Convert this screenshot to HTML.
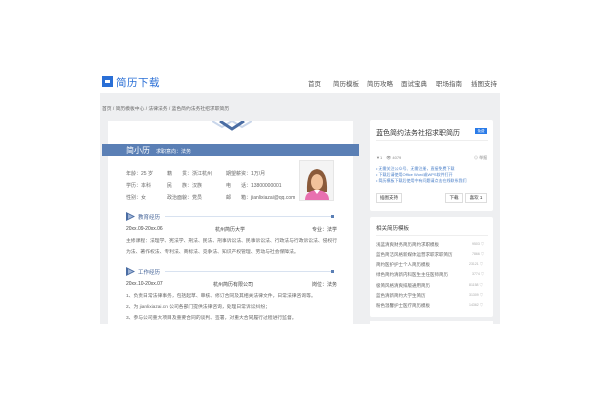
<!DOCTYPE html>
<html><head><meta charset="utf-8"><style>
*{margin:0;padding:0;box-sizing:border-box}
body{width:600px;height:400px;background:#fff;position:relative;overflow:hidden;font-family:"Liberation Sans","Noto Sans CJK SC",sans-serif;color:#333}
.a{position:absolute;white-space:nowrap}
.t{font-size:5px;color:#666}
</style></head><body>
<div class="a" style="left:102px;top:76px;width:11px;height:11px;background:#2a6fd6"></div>
<div class="a" style="left:105px;top:80px;width:5px;height:4px;border-top:3px solid #fff;"></div>
<div class="a" style="left:116px;top:75px;font-size:10.5px;color:#2a6fd6;letter-spacing:0.5px">简历下载</div>
<div class="a" style="left:308px;top:78px;font-size:6.5px;color:#555">首页</div>
<div class="a" style="left:333px;top:78px;font-size:6.5px;color:#555">简历模板</div>
<div class="a" style="left:367px;top:78px;font-size:6.5px;color:#555">简历攻略</div>
<div class="a" style="left:401px;top:78px;font-size:6.5px;color:#555">面试宝典</div>
<div class="a" style="left:436px;top:78px;font-size:6.5px;color:#555">职场指南</div>
<div class="a" style="left:471px;top:78px;font-size:6.5px;color:#555">插图支持</div>
<div class="a" style="left:100px;top:93px;width:400px;height:231px;background:#eeeff1"></div>
<div class="a t" style="left:102px;top:105px;font-size:4.8px;color:#666">首页 / 简历模板中心 / 法律法务 / 蓝色简约法务社招求职简历</div>
<div class="a" style="left:108px;top:121px;width:245px;height:203px;background:#fff"></div>
<svg class="a" style="left:212px;top:121px" width="40" height="10"><path d="M0 0 L10 6 L20 0 L30 6 L40 0" fill="none" stroke="#c9d6ea" stroke-width="2"/><path d="M8 0 L20 8 L32 0" fill="none" stroke="#4a6da3" stroke-width="3"/></svg>
<div class="a" style="left:102px;top:144px;width:257px;height:12px;background:#5a7fb5"></div>
<div class="a" style="left:126px;top:145px;font-size:8px;color:#fff">简小历</div>
<div class="a" style="left:156px;top:147.5px;font-size:5px;color:#fff">求职意向：法务</div>
<div class="a t" style="left:126px;top:170px">年龄：25 岁</div>
<div class="a t" style="left:167px;top:170px">籍　　贯：浙江杭州</div>
<div class="a t" style="left:226px;top:170px">期望薪资：1万/月</div>
<div class="a t" style="left:126px;top:182px">学历：本科</div>
<div class="a t" style="left:167px;top:182px">民　　族：汉族</div>
<div class="a t" style="left:226px;top:182px">电　　话：13800000001</div>
<div class="a t" style="left:126px;top:194px">性别：女</div>
<div class="a t" style="left:167px;top:194px">政治面貌：党员</div>
<div class="a t" style="left:226px;top:194px">邮　　箱：jianlixiazai@qq.com</div>
<div class="a" style="left:299px;top:160px;width:35px;height:41px;background:#f4f4f4;border:1px solid #e6e6e6"></div>
<svg class="a" style="left:303px;top:166px" width="28" height="34"><path d="M4 26 Q3 4 14 3 Q25 4 24 26 Z" fill="#8a5a3a"/><ellipse cx="14" cy="16" rx="6" ry="8" fill="#f2c29b"/><path d="M8 12 Q14 4 20 12 Q19 6 14 5 Q9 6 8 12Z" fill="#8a5a3a"/><path d="M2 34 Q2 25 14 24 Q26 25 26 34Z" fill="#e870b0"/><path d="M11 24 L14 28 L17 24Z" fill="#fff"/></svg>
<svg class="a" style="left:126px;top:212px" width="10" height="9"><path d="M0 0 L9 4.5 L0 9Z" fill="#4a6da3"/><path d="M2 2 L7 4.5 L2 7Z" fill="#9fb4d6"/></svg>
<div class="a" style="left:138px;top:213px;font-size:5.5px;color:#3f5f95">教育经历</div>
<div class="a" style="left:165px;top:216px;width:167px;height:1px;background:#d8e2f0"></div>
<div class="a" style="left:331px;top:215px;width:3px;height:3px;background:#5a7fb5"></div>
<div class="a t" style="left:126px;top:226px;color:#444">20xx.09-20xx.06</div>
<div class="a t" style="left:215px;top:226px;color:#444">杭州简历大学</div>
<div class="a t" style="left:312px;top:226px;color:#444">专业：法学</div>
<div class="a t" style="left:126px;top:237px;font-size:4.8px">主修课程：法理学、宪法学、刑法、民法、刑事诉讼法、民事诉讼法、行政法与行政诉讼法、侵权行</div>
<div class="a t" style="left:126px;top:248px;font-size:4.8px">为法、著作权法、专利法、商标法、竞争法、知识产权管理、劳动与社会保障法。</div>
<svg class="a" style="left:126px;top:267px" width="10" height="9"><path d="M0 0 L9 4.5 L0 9Z" fill="#4a6da3"/><path d="M2 2 L7 4.5 L2 7Z" fill="#9fb4d6"/></svg>
<div class="a" style="left:138px;top:268px;font-size:5.5px;color:#3f5f95">工作经历</div>
<div class="a" style="left:165px;top:271px;width:167px;height:1px;background:#d8e2f0"></div>
<div class="a" style="left:331px;top:270px;width:3px;height:3px;background:#5a7fb5"></div>
<div class="a t" style="left:126px;top:281px;color:#444">20xx.10-20xx.07</div>
<div class="a t" style="left:213px;top:281px;color:#444">杭州简历有限公司</div>
<div class="a t" style="left:312px;top:281px;color:#444">岗位：法务</div>
<div class="a t" style="left:126px;top:292px;font-size:4.8px">1、负责日常法律事务，包括起草、审核、修订合同及其相关法律文件，日常法律咨询等。</div>
<div class="a t" style="left:126px;top:303px;font-size:4.8px">2、为 jianlixiazai.cn 公司各部门提供法律咨询，处理日常诉讼纠纷；</div>
<div class="a t" style="left:126px;top:314px;font-size:4.8px">3、参与公司重大项目及重要合同的谈判、签署，对重大合同履行过程进行监督。</div>
<div class="a" style="left:370px;top:120px;width:123px;height:91px;background:#fff;border-radius:2px"></div>
<div class="a" style="left:376px;top:128px;font-size:7px;color:#333">蓝色简约法务社招求职简历</div>
<div class="a" style="left:475px;top:128px;width:12px;height:6px;background:#2a7be8;color:#fff;font-size:3.5px;text-align:center;line-height:6px">免费</div>
<div class="a" style="left:376px;top:140px;width:112px;height:1px;background:#eee"></div>
<div class="a" style="left:376px;top:155px;font-size:4px;color:#888">▼1　👁 4079</div>
<div class="a" style="left:474px;top:155px;font-size:4px;color:#888">⊙ 举报</div>
<div class="a" style="left:376px;top:166px;font-size:4px;color:#4a7fc8">• 无需关注公众号、无需注册，直接免费下载</div>
<div class="a" style="left:376px;top:172px;font-size:4px;color:#4a7fc8">• 下载后请使用Office Word或WPS软件打开</div>
<div class="a" style="left:376px;top:178px;font-size:4px;color:#4a7fc8">• 简历模板下载后使用中有问题请点击在线联系我们</div>
<div class="a" style="left:376px;top:193px;width:26px;height:10px;border:1px solid #ddd;font-size:4.5px;text-align:center;line-height:8px;color:#333">插图支持</div>
<div class="a" style="left:445px;top:193px;width:18px;height:10px;border:1px solid #ddd;font-size:4.5px;text-align:center;line-height:8px;color:#333">下载</div>
<div class="a" style="left:465px;top:193px;width:22px;height:10px;border:1px solid #ddd;font-size:4.5px;text-align:center;line-height:8px;color:#333">喜欢 1</div>
<div class="a" style="left:370px;top:217px;width:123px;height:100px;background:#fff;border-radius:2px"></div>
<div class="a" style="left:376px;top:224px;font-size:5.5px;color:#444">相关简历模板</div>
<div class="a" style="left:376px;top:235px;width:112px;height:1px;background:#eee"></div>
<div class="a t" style="left:376px;top:242px;font-size:4.5px">浅蓝清爽财务简历简约求职模板</div><div class="a" style="left:472px;top:242px;font-size:3.5px;color:#aaa">9503 ♡</div>
<div class="a t" style="left:376px;top:252px;font-size:4.5px">蓝色简洁风格新媒体运营求职求职简历</div><div class="a" style="left:472px;top:252px;font-size:3.5px;color:#aaa">7866 ♡</div>
<div class="a t" style="left:376px;top:262px;font-size:4.5px">简约医护护士个人简历模板</div><div class="a" style="left:469px;top:262px;font-size:3.5px;color:#aaa">23121 ♡</div>
<div class="a t" style="left:376px;top:272px;font-size:4.5px">绿色简约清新内科医生主任医师简历</div><div class="a" style="left:472px;top:272px;font-size:3.5px;color:#aaa">3774 ♡</div>
<div class="a t" style="left:376px;top:283px;font-size:4.5px">极简风格清爽排版通用简历</div><div class="a" style="left:469px;top:283px;font-size:3.5px;color:#aaa">81158 ♡</div>
<div class="a t" style="left:376px;top:293px;font-size:4.5px">蓝色清新简约大学生简历</div><div class="a" style="left:469px;top:293px;font-size:3.5px;color:#aaa">31309 ♡</div>
<div class="a t" style="left:376px;top:303px;font-size:4.5px">粉色温馨护士医疗简历模板</div><div class="a" style="left:469px;top:303px;font-size:3.5px;color:#aaa">14362 ♡</div>
<div class="a" style="left:370px;top:321px;width:123px;height:3px;background:#fff"></div>
</body></html>
